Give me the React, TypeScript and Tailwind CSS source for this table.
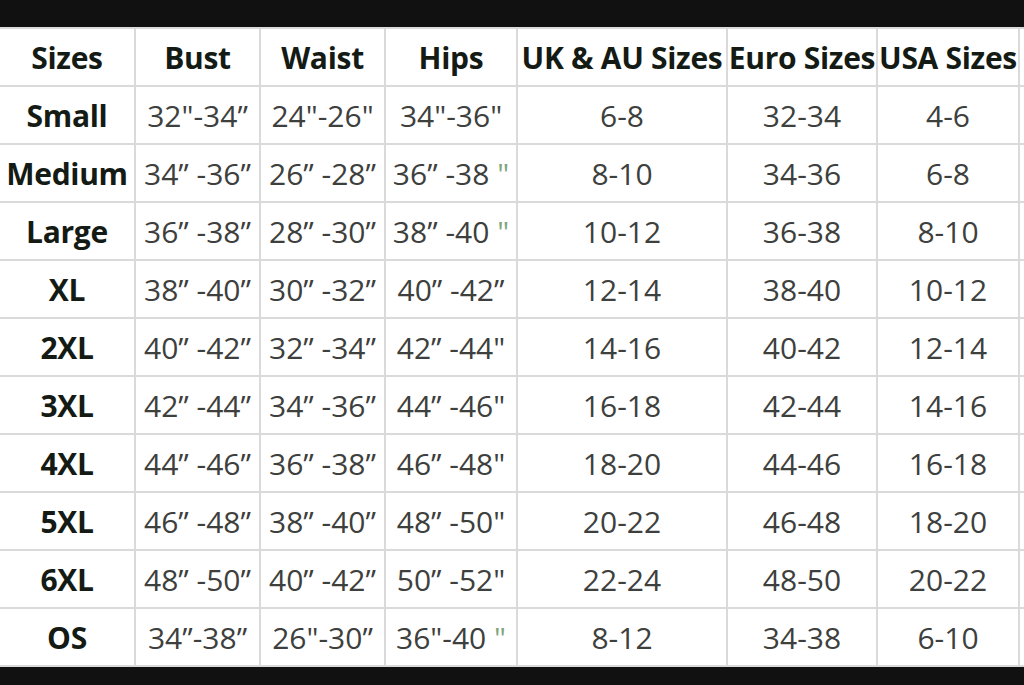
const header = ['Sizes', 'Bust', 'Waist', 'Hips', 'UK & AU Sizes', 'Euro Sizes', 'USA Sizes'];

// a trailing "~" in a value marks the faint green straight quote
const rows: string[][] = [
  ['Small', '32"-34”', '24"-26"', '34"-36"', '6-8', '32-34', '4-6'],
  ['Medium', '34” -36”', '26” -28”', '36” -38 ~', '8-10', '34-36', '6-8'],
  ['Large', '36” -38”', '28” -30”', '38” -40 ~', '10-12', '36-38', '8-10'],
  ['XL', '38” -40”', '30” -32”', '40” -42”', '12-14', '38-40', '10-12'],
  ['2XL', '40” -42”', '32” -34”', '42” -44"', '14-16', '40-42', '12-14'],
  ['3XL', '42” -44”', '34” -36”', '44” -46"', '16-18', '42-44', '14-16'],
  ['4XL', '44” -46”', '36” -38”', '46” -48"', '18-20', '44-46', '16-18'],
  ['5XL', '46” -48”', '38” -40”', '48” -50"', '20-22', '46-48', '18-20'],
  ['6XL', '48” -50”', '40” -42”', '50” -52"', '22-24', '48-50', '20-22'],
  ['OS', '34”-38”', '26"-30”', '36"-40 ~', '8-12', '34-38', '6-10'],
];

function Value({ text }: { text: string }) {
  if (text.endsWith('~')) {
    return (
      <span>
        {text.slice(0, -2)}&nbsp;
        <span className="text-[#7fa57a]">"</span>
      </span>
    );
  }
  return <span>{text}</span>;
}

export default function App() {
  return (
    <div
      className="flex h-[685px] w-[1024px] flex-col overflow-hidden bg-[#111111]"
      style={{ fontFamily: '"Open Sans", "Liberation Sans", sans-serif' }}
    >
      <div className="h-[27px] shrink-0" />
      <div className="grid grid-cols-[134px_123px_123px_130px_208px_148px_140px_1fr] gap-[2px] border-y-2 border-[#dadada] bg-[#dadada]">
        {header.map((h) => (
          <div
            key={h}
            className="flex h-[56px] items-center justify-center whitespace-nowrap bg-white text-[30px] font-bold tracking-[-0.3px] text-[#141a14]"
          >
            {h}
          </div>
        ))}
        <div className="bg-white" />
        {rows.map((row) => (
          <div key={row[0]} className="contents">
            {row.map((cell, i) => (
              <div
                key={i}
                className={
                  i === 0
                    ? 'flex h-[56px] items-center justify-center whitespace-nowrap bg-white text-[30px] font-bold tracking-[-0.3px] text-[#141a14]'
                    : 'flex h-[56px] items-center justify-center whitespace-nowrap bg-white text-[30px] text-[#3d403d]'
                }
              >
                <Value text={cell} />
              </div>
            ))}
            <div className="bg-white" />
          </div>
        ))}
      </div>
    </div>
  );
}
